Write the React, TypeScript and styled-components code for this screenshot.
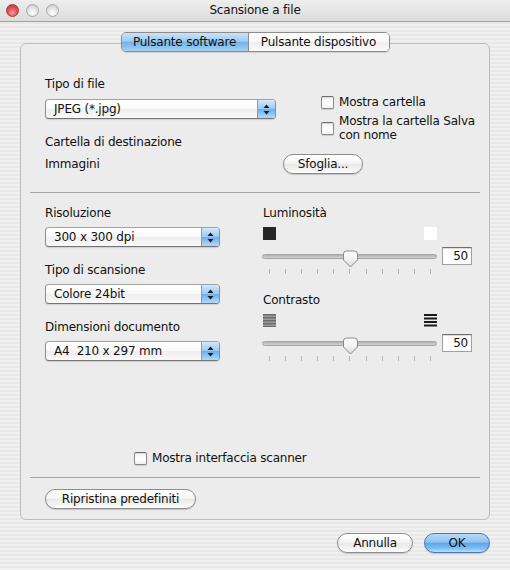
import React from 'react';
import styled, { createGlobalStyle } from 'styled-components';

const Global = createGlobalStyle`
  html, body { margin: 0; padding: 0; }
  body {
    font-family: "DejaVu Sans", "Lucida Grande", sans-serif;
    font-size: 12px;
    letter-spacing: -0.2px;
    color: #111;
  }
`;

const Window = styled.div`
  width: 510px;
  height: 570px;
  overflow: hidden;
  display: flex;
  flex-direction: column;
  background: repeating-linear-gradient(180deg, #f0f0f0 0px, #f0f0f0 2px, #e8e8e8 2px, #e8e8e8 4px);
`;

const TitleBar = styled.div`
  height: 21px;
  border-bottom: 1px solid #a2a2a2;
  background: linear-gradient(#eeeeee, #dcdcdc);
  display: grid;
  grid-template-columns: 1fr auto 1fr;
  align-items: center;
`;

const Lights = styled.div`
  display: flex;
  gap: 7px;
  padding-left: 6px;
  padding-bottom: 1px;
`;

const Light = styled.span<{ $red?: boolean }>`
  width: 13px;
  height: 13px;
  box-sizing: border-box;
  border-radius: 50%;
  border: 1px solid ${(p) => (p.$red ? '#a23a3a' : '#a9a9a9')};
  background: ${(p) =>
    p.$red
      ? 'radial-gradient(circle at 50% 70%, #f6a0a0 0%, #e2585a 45%, #b83232 100%)'
      : 'radial-gradient(circle at 50% 70%, #ffffff 0%, #e6e6e6 45%, #c4c4c4 100%)'};
`;

const Title = styled.div`
  font-size: 12px;
  line-height: 16px;
  padding-bottom: 1px;
`;

const Body = styled.div`
  flex: 1;
  display: flex;
  flex-direction: column;
  padding: 10px 20px 0 20px;
`;

const TabView = styled.div`
  display: flex;
  flex-direction: column;
`;

const Tabs = styled.div`
  align-self: center;
  display: flex;
  height: 20px;
  box-sizing: border-box;
  border: 1px solid #8c8c8c;
  border-radius: 5px;
  overflow: hidden;
  margin-bottom: -9px;
  position: relative;
  z-index: 1;
  box-shadow: 0 1px 1px rgba(0, 0, 0, 0.12);
`;

const Tab = styled.div<{ $active?: boolean; $width: number }>`
  width: ${(p) => p.$width}px;
  text-align: center;
  line-height: 18px;
  background: ${(p) =>
    p.$active
      ? 'linear-gradient(#c9e2f7 0%, #9fcbf0 45%, #73b3ea 52%, #a2d0f5 100%)'
      : 'linear-gradient(#ffffff 0%, #f8f8f8 50%, #efefef 52%, #fbfbfb 100%)'};
  & + & {
    border-left: 1px solid #8c8c8c;
  }
`;

const Panel = styled.div`
  height: 477px;
  box-sizing: border-box;
  border: 1px solid #bcbcbc;
  border-radius: 6px;
  background: #ececec;
  padding: 0 9px 10px 9px;
  display: flex;
  flex-direction: column;
`;

const TopSection = styled.div`
  padding: 32px 0 0 15px;
`;

const TopRow = styled.div`
  display: flex;
`;

const Column = styled.div<{ $width?: number }>`
  display: flex;
  flex-direction: column;
  ${(p) => (p.$width ? `width: ${p.$width}px;` : '')}
`;

const RightChecks = styled.div`
  margin-left: 45px;
  padding-top: 19px;
  display: flex;
  flex-direction: column;
  gap: 5px;
`;

const Label = styled.div<{ $mt?: number; $width?: number }>`
  line-height: 16px;
  white-space: nowrap;
  margin-top: ${(p) => p.$mt ?? 0}px;
  ${(p) => (p.$width ? `width: ${p.$width}px;` : '')}
`;

const CheckRow = styled.label<{ $ml?: number }>`
  display: flex;
  align-items: center;
  gap: 5px;
  line-height: 14px;
  margin-left: ${(p) => p.$ml ?? 0}px;
`;

const CheckBox = styled.span`
  width: 13px;
  height: 13px;
  flex: none;
  box-sizing: border-box;
  border: 1px solid #8a8a8a;
  border-top-color: #6e6e6e;
  border-radius: 2px;
  background: linear-gradient(#f4f4f4 0%, #ffffff 60%, #f0f0f0 100%);
  box-shadow: 0 1px 1px rgba(0, 0, 0, 0.15), inset 0 1px 1px rgba(0, 0, 0, 0.12);
`;

const Popup = styled.div<{ $width: number; $mt?: number }>`
  width: ${(p) => p.$width}px;
  height: 20px;
  margin-top: ${(p) => p.$mt ?? 0}px;
  box-sizing: border-box;
  border: 1px solid #8e8e8e;
  border-top-color: #a2a2a2;
  border-bottom-color: #737373;
  border-radius: 4px;
  background: linear-gradient(#ffffff 0%, #f9f9f9 50%, #eeeeee 52%, #fafafa 100%);
  box-shadow: 0 1px 1px rgba(0, 0, 0, 0.12);
  display: flex;
  align-items: stretch;
  overflow: hidden;
`;

const PopupText = styled.span`
  flex: 1;
  padding-left: 8px;
  line-height: 18px;
  white-space: pre;
`;

const PopupArrows = styled.span`
  width: 17px;
  flex: none;
  border-left: 1px solid #7d9fc6;
  background: linear-gradient(#d3e8fb 0%, #9ccbf2 48%, #6cafea 52%, #b1dafb 100%);
  display: flex;
  align-items: center;
  justify-content: center;
`;

const Button = styled.button<{ $width: number; $default?: boolean }>`
  width: ${(p) => p.$width}px;
  height: 20px;
  flex: none;
  padding: 0;
  box-sizing: border-box;
  border-radius: 10px;
  border: 1px solid ${(p) => (p.$default ? '#4a78ad' : '#8c8c8c')};
  font-family: inherit;
  font-size: 12px;
  letter-spacing: inherit;
  line-height: 18px;
  color: #111;
  background: ${(p) =>
    p.$default
      ? 'linear-gradient(#b6dafa 0%, #8ec4f1 45%, #5fa7e8 52%, #7fbdf2 80%, #b9e0fd 100%)'
      : 'linear-gradient(#ffffff 0%, #f6f6f6 45%, #e9e9e9 52%, #f3f3f3 80%, #ffffff 100%)'};
  box-shadow: 0 1px 1px rgba(0, 0, 0, 0.18);
`;

const ImmaginiRow = styled.div`
  display: flex;
  align-items: center;
  height: 20px;
  margin-top: 4px;
`;

const Divider = styled.div<{ $mt: number }>`
  height: 0;
  border-top: 1px solid #a4a4a4;
  margin-top: ${(p) => p.$mt}px;
`;

const MiddleSection = styled.div`
  padding: 12px 0 0 15px;
  display: flex;
`;

const RightCol = styled.div`
  margin-left: 43px;
  display: flex;
  flex-direction: column;
`;

const SliderBlock = styled.div<{ $mt?: number }>`
  display: flex;
  flex-direction: column;
  margin-top: ${(p) => p.$mt ?? 0}px;
`;

const IconRow = styled.div`
  width: 174px;
  height: 13px;
  margin-top: 6px;
  display: flex;
  justify-content: space-between;
`;

const Swatch = styled.span<{ $color: string }>`
  width: 13px;
  height: 13px;
  background: ${(p) => p.$color};
`;

const SliderRow = styled.div`
  height: 18px;
  margin-top: 7px;
  display: flex;
  align-items: center;
  gap: 5px;
`;

const TrackArea = styled.div`
  position: relative;
  width: 175px;
  height: 18px;
  display: flex;
  align-items: center;
  margin-left: -1px;
`;

const Track = styled.div`
  width: 100%;
  height: 5px;
  box-sizing: border-box;
  border-radius: 3px;
  border: 1px solid #a6a6a6;
  background: linear-gradient(#b2b2b2, #d2d2d2);
`;

const Thumb = styled.svg<{ $value: number }>`
  position: absolute;
  top: 3px;
  left: ${(p) => 7 + (162 * p.$value) / 100 - 8.5}px;
`;

const NumField = styled.div`
  width: 30px;
  height: 18px;
  box-sizing: border-box;
  border: 1px solid #a0a0a0;
  border-top-color: #6f6f6f;
  background: #fff;
  text-align: right;
  padding-right: 3px;
  line-height: 16px;
  box-shadow: inset 0 1px 0 #dcdcdc;
`;

const Ticks = styled.div`
  width: 174px;
  box-sizing: border-box;
  padding: 0 6px;
  margin-top: 4px;
  display: flex;
  justify-content: space-between;
`;

const Tick = styled.span`
  width: 1px;
  height: 5px;
  background: #b4b4b4;
`;

const BottomGroup = styled.div`
  margin-top: auto;
  display: flex;
  flex-direction: column;
`;

const ResetRow = styled.div`
  padding-left: 15px;
  margin-top: 11px;
  display: flex;
`;

const DialogButtons = styled.div`
  margin-top: 13px;
  display: flex;
  justify-content: flex-end;
  gap: 11px;
`;

const Arrows = () => (
  <svg width="7" height="11" viewBox="0 0 7 11">
    <path d="M3.5 0.5 L6.5 4 L0.5 4 Z" fill="#1c1c1c" />
    <path d="M3.5 10.5 L6.5 7 L0.5 7 Z" fill="#1c1c1c" />
  </svg>
);

const PopupButton = ({ text, width, mt }: { text: string; width: number; mt?: number }) => (
  <Popup $width={width} $mt={mt}>
    <PopupText>{text}</PopupText>
    <PopupArrows>
      <Arrows />
    </PopupArrows>
  </Popup>
);

const ThumbShape = ({ value }: { value: number }) => (
  <Thumb $value={value} width="17" height="18" viewBox="0 0 17 18">
    <defs>
      <linearGradient id="thumbGrad" x1="0" y1="0" x2="0" y2="1">
        <stop offset="0" stopColor="#ffffff" />
        <stop offset="0.5" stopColor="#f2f2f2" />
        <stop offset="1" stopColor="#dadada" />
      </linearGradient>
    </defs>
    <path
      d="M1.5 4 Q1.5 1 4.5 1 H12.5 Q15.5 1 15.5 4 V10 L8.5 17 L1.5 10 Z"
      fill="url(#thumbGrad)"
      stroke="#8a8a8a"
      strokeWidth="1"
    />
  </Thumb>
);

const LowContrastIcon = () => (
  <svg width="13" height="13" viewBox="0 0 13 13">
    <rect x="0" y="0" width="13" height="13" fill="#9c9c9c" />
    {[0, 3, 6, 9, 12].map((y) => (
      <rect key={y} x="0" y={y} width="13" height="1.5" fill="#6c6c6c" />
    ))}
  </svg>
);

const HighContrastIcon = () => (
  <svg width="13" height="13" viewBox="0 0 13 13">
    {[0, 3.5, 7, 10.5].map((y) => (
      <rect key={y} x="0" y={y} width="13" height="2" fill="#1a1a1a" />
    ))}
  </svg>
);

const Slider = ({ value }: { value: number }) => (
  <>
    <SliderRow>
      <TrackArea>
        <Track />
        <ThumbShape value={value} />
      </TrackArea>
      <NumField>{value}</NumField>
    </SliderRow>
    <Ticks>
      {Array.from({ length: 11 }).map((_, i) => (
        <Tick key={i} />
      ))}
    </Ticks>
  </>
);

export default function App() {
  return (
    <>
      <Global />
      <Window>
        <TitleBar>
          <Lights>
            <Light $red />
            <Light />
            <Light />
          </Lights>
          <Title>Scansione a file</Title>
          <div />
        </TitleBar>
        <Body>
          <TabView>
            <Tabs>
              <Tab $active $width={126}>Pulsante software</Tab>
              <Tab $width={140}>Pulsante dispositivo</Tab>
            </Tabs>
            <Panel>
              <TopSection>
                <TopRow>
                  <Column $width={231}>
                    <Label>Tipo di file</Label>
                    <PopupButton text="JPEG (*.jpg)" width={231} mt={7} />
                    <Label $mt={15}>Cartella di destinazione</Label>
                  </Column>
                  <RightChecks>
                    <CheckRow>
                      <CheckBox />
                      <span>Mostra cartella</span>
                    </CheckRow>
                    <CheckRow>
                      <CheckBox />
                      <span>
                        Mostra la cartella Salva
                        <br />
                        con nome
                      </span>
                    </CheckRow>
                  </RightChecks>
                </TopRow>
                <ImmaginiRow>
                  <Label $width={238}>Immagini</Label>
                  <Button $width={80}>Sfoglia...</Button>
                </ImmaginiRow>
              </TopSection>
              <Divider $mt={18} />
              <MiddleSection>
                <Column $width={175}>
                  <Label>Risoluzione</Label>
                  <PopupButton text="300 x 300 dpi" width={175} mt={6} />
                  <Label $mt={15}>Tipo di scansione</Label>
                  <PopupButton text="Colore 24bit" width={175} mt={6} />
                  <Label $mt={15}>Dimensioni documento</Label>
                  <PopupButton text="A4  210 x 297 mm" width={175} mt={6} />
                </Column>
                <RightCol>
                  <SliderBlock>
                    <Label>Luminosità</Label>
                    <IconRow>
                      <Swatch $color="#262626" />
                      <Swatch $color="#ffffff" />
                    </IconRow>
                    <Slider value={50} />
                  </SliderBlock>
                  <SliderBlock $mt={18}>
                    <Label>Contrasto</Label>
                    <IconRow>
                      <LowContrastIcon />
                      <HighContrastIcon />
                    </IconRow>
                    <Slider value={50} />
                  </SliderBlock>
                </RightCol>
              </MiddleSection>
              <BottomGroup>
                <CheckRow $ml={104}>
                  <CheckBox />
                  <Label>Mostra interfaccia scanner</Label>
                </CheckRow>
                <Divider $mt={11} />
                <ResetRow>
                  <Button $width={151}>Ripristina predefiniti</Button>
                </ResetRow>
              </BottomGroup>
            </Panel>
          </TabView>
          <DialogButtons>
            <Button $width={76}>Annulla</Button>
            <Button $width={66} $default>
              OK
            </Button>
          </DialogButtons>
        </Body>
      </Window>
    </>
  );
}
